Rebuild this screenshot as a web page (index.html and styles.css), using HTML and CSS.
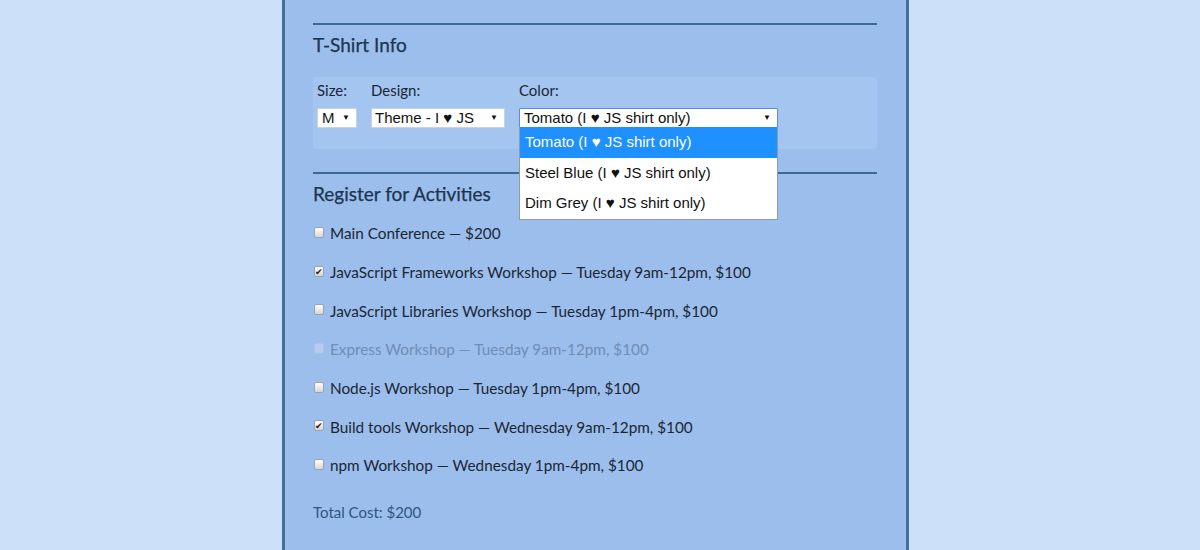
FILE: index.html
```html
<!DOCTYPE html>
<html>
<head>
<meta charset="utf-8">
<link rel="stylesheet" href="styles.css">
</head>
<body>
<div class="panel">
  <hr class="rule">
  <h2 class="heading">T-Shirt Info</h2>
  <div class="shirt-box">
    <div class="field">
      <span class="label">Size:</span>
      <div class="select sel-size"><span>M</span><span class="arrow">▼</span></div>
    </div>
    <div class="field">
      <span class="label">Design:</span>
      <div class="select sel-design"><span>Theme - I ♥ JS</span><span class="arrow">▼</span></div>
    </div>
    <div class="field">
      <span class="label">Color:</span>
      <div class="select sel-color focused"><span>Tomato (I ♥ JS shirt only)</span><span class="arrow">▼</span>
        <ul class="options">
          <li class="opt active">Tomato (I ♥ JS shirt only)</li>
          <li class="opt">Steel Blue (I ♥ JS shirt only)</li>
          <li class="opt">Dim Grey (I ♥ JS shirt only)</li>
        </ul>
      </div>
    </div>
  </div>
  <hr class="rule">
  <h2 class="heading">Register for Activities</h2>
  <ul class="activities">
    <li class="act"><span class="cb"></span>Main Conference — $200</li>
    <li class="act"><span class="cb checked">✔</span>JavaScript Frameworks Workshop — Tuesday 9am-12pm, $100</li>
    <li class="act"><span class="cb"></span>JavaScript Libraries Workshop — Tuesday 1pm-4pm, $100</li>
    <li class="act disabled"><span class="cb"></span>Express Workshop — Tuesday 9am-12pm, $100</li>
    <li class="act"><span class="cb"></span>Node.js Workshop — Tuesday 1pm-4pm, $100</li>
    <li class="act"><span class="cb checked">✔</span>Build tools Workshop — Wednesday 9am-12pm, $100</li>
    <li class="act"><span class="cb"></span>npm Workshop — Wednesday 1pm-4pm, $100</li>
  </ul>
  <p class="total">Total Cost: $200</p>
</div>
</body>
</html>
```
FILE: styles.css
```css
html, body {
  margin: 0;
  padding: 0;
  height: 100%;
}
body {
  background: #cce0f9;
  font-family: Lato, "Open Sans", sans-serif;
  color: #1b2633;
  overflow: hidden;
}
.panel {
  box-sizing: border-box;
  width: 627px;
  min-height: 100%;
  margin-left: 282px;
  background: #9bbeed;
  border-left: 3px solid #44719c;
  border-right: 3px solid #44719c;
  padding: 23px 29px 0 28px;
}
.rule {
  margin: 0;
  border: 0;
  height: 2px;
  background: #3e6a92;
}
.heading {
  margin: 0;
  font-size: 19px;
  font-weight: 400;
  color: #1b3550;
  line-height: 24px;
  -webkit-text-stroke: 0.25px #1b3550;
}
.rule + .heading {
  margin-top: 8px;
}
.shirt-box {
  margin-top: 20px;
  margin-bottom: 23px;
  height: 72px;
  box-sizing: border-box;
  background: #a5c5f1;
  border-radius: 4px;
  padding: 3px 0 0 4px;
  display: flex;
  gap: 14px;
}
.field {
  display: flex;
  flex-direction: column;
  gap: 8px;
}
.label {
  font-size: 15px;
  line-height: 20px;
  color: #1b2633;
}
.select {
  position: relative;
  box-sizing: border-box;
  height: 20px;
  background: #fff;
  border: 1px solid #c9d3df;
  border-radius: 1px;
  font-family: "Liberation Sans", Arial, sans-serif;
  font-size: 15px;
  line-height: 18px;
  color: #111;
  display: flex;
  justify-content: space-between;
  align-items: center;
  padding: 0 6px 0 4px;
}
.arrow {
  font-size: 8px;
  line-height: 18px;
}
.sel-size { width: 40px; padding-left: 4px; }
.sel-design { width: 134px; padding-left: 3px; }
.sel-color { width: 259px; }
.focused {
  border-color: #5a8be0;
}
.options {
  position: absolute;
  left: -1px;
  top: 18px;
  width: 259px;
  box-sizing: border-box;
  margin: 0;
  padding: 0;
  list-style: none;
  background: #fff;
  border: 1px solid #8d9bb0;
  border-top: 0;
  z-index: 5;
}
.opt {
  height: 30.5px;
  line-height: 30px;
  padding-left: 5px;
  font-size: 15px;
  color: #111;
}
.opt.active {
  background: #1e90ff;
  color: #fff;
}
.activities {
  list-style: none;
  margin: 8px 0 0;
  padding: 0;
}
.act {
  display: flex;
  align-items: center;
  height: 38.7px;
  font-size: 15.3px;
  color: #1b2633;
}
.cb {
  box-sizing: border-box;
  width: 10px;
  height: 11px;
  margin: 0 6px 0 1px;
  border: 1px solid #9aa3ad;
  border-radius: 2px;
  background: linear-gradient(#ffffff, #d6d6d6);
  font-size: 9px;
  line-height: 9px;
  color: #222;
  text-align: center;
  position: relative;
  top: -1px;
}
.act.disabled {
  color: #6f8db6;
}
.act.disabled .cb {
  border-color: #a9c3e6;
  background: #b4cdef;
}
.total {
  margin: 18px 0 0;
  font-size: 15px;
  color: #2f577e;
}
```
